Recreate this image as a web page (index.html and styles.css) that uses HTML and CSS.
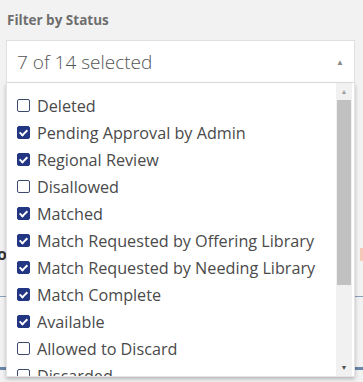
FILE: index.html
```html
<!DOCTYPE html>
<html lang="en">
<head>
  <meta charset="UTF-8" />
  <title>Filter by Status</title>
  <link rel="stylesheet" href="styles.css">
</head>
<body>
  <div class="filter">
    <div class="filter-label">Filter by Status</div>

    <div class="select-wrap">
      <div class="select">
        <span class="select-value">7 of 14 selected</span>
        <span class="select-arrow">&#9650;</span>
      </div>

      <div class="dropdown">
        <ul class="options">
          <li><span class="box"></span>Deleted</li>
          <li><span class="box checked"></span>Pending Approval by Admin</li>
          <li><span class="box checked"></span>Regional Review</li>
          <li><span class="box"></span>Disallowed</li>
          <li><span class="box checked"></span>Matched</li>
          <li><span class="box checked"></span>Match Requested by Offering Library</li>
          <li><span class="box checked"></span>Match Requested by Needing Library</li>
          <li><span class="box checked"></span>Match Complete</li>
          <li><span class="box checked"></span>Available</li>
          <li><span class="box"></span>Allowed to Discard</li>
          <li><span class="box"></span>Discarded</li>
        </ul>
        <div class="scrollbar">
          <span class="sb-btn">&#9650;</span>
          <span class="sb-thumb"></span>
          <span class="sb-track"></span>
          <span class="sb-btn">&#9660;</span>
        </div>
      </div>
    </div>

    <!-- contenu derrière la liste -->
    <div class="behind">
      <div class="behind-row"><span class="behind-text">o</span><span class="behind-mark"></span></div>
      <div class="behind-line"></div>
    </div>
  </div>
  <div class="page-bottom"></div>
</body>
</html>
```

FILE: styles.css
```css
body {
  margin: 0;
  background: #f2f2f2;
  font-family: 'Open Sans', 'Liberation Sans', sans-serif;
  color: #444;
}

.filter {
  padding: 11px 8px 0 6px;
  height: 367px;
  box-sizing: border-box;
}

.filter-label {
  font-size: 13.5px;
  font-weight: 700;
  color: #6e6e6e;
  padding-left: 1px;
  height: 29px;
  line-height: 18px;
}

.select-wrap {
  position: relative;
}

.select {
  display: flex;
  align-items: center;
  justify-content: space-between;
  height: 41px;
  padding: 0 10px 0 10px;
  background: #fff;
  border: 1px solid #e0e0e0;
}

.select-value {
  font-size: 19px;
  font-weight: 300;
  color: #555;
}

.select-arrow {
  font-size: 8px;
  color: #8a8a8a;
}

.dropdown {
  position: absolute;
  top: 100%;
  left: 0;
  right: 0;
  height: 293px;
  display: flex;
  background: #fff;
  border: 1px solid #e4e4e4;
  border-top: none;
  box-shadow: 0 2px 4px rgba(0, 0, 0, 0.25);
  overflow: hidden;
  z-index: 2;
}

.options {
  flex: 1;
  list-style: none;
  margin: 0;
  padding: 9px 0 0 10px;
}

.options li {
  display: flex;
  align-items: center;
  height: 27px;
  font-size: 16.2px;
  color: #4a4a4a;
  white-space: nowrap;
}

.box {
  width: 13px;
  height: 13px;
  box-sizing: border-box;
  border: 1.5px solid #3c4a70;
  border-radius: 2px;
  margin-right: 7px;
  flex-shrink: 0;
  position: relative;
}

.box.checked {
  background: #233684;
  border-color: #233684;
}

.box.checked::after {
  content: "";
  position: absolute;
  left: 3px;
  top: 1px;
  width: 3px;
  height: 6px;
  border: solid #fff;
  border-width: 0 2px 2px 0;
  transform: rotate(45deg);
}

.scrollbar {
  width: 16px;
  margin-right: 2px;
  display: flex;
  flex-direction: column;
  background: #f1f1f1;
}

.sb-btn {
  height: 17px;
  font-size: 7px;
  line-height: 17px;
  text-align: center;
  color: #a0a0a0;
}

.sb-btn:last-child {
  color: #505050;
}

.sb-thumb {
  height: 185px;
  margin: 0 1px;
  background: #c1c1c1;
}

.sb-track {
  flex: 1;
}

.behind {
  padding-top: 151px;
}

.behind-row {
  display: flex;
  justify-content: space-between;
  align-items: center;
  margin: 0 -8px 0 -6px;
  height: 40px;
}

.behind-text {
  font-size: 16px;
  font-weight: 700;
  color: #333;
  margin-left: -3px;
}

.behind-mark {
  width: 3px;
  height: 13px;
  background: #f4c9b8;
}

.behind-line {
  margin: 22px -8px 0 -6px;
  border-top: 1px solid #8aa0bd;
}

.page-bottom {
  height: 15px;
  border-top: 3px solid #6a86a8;
}
```
